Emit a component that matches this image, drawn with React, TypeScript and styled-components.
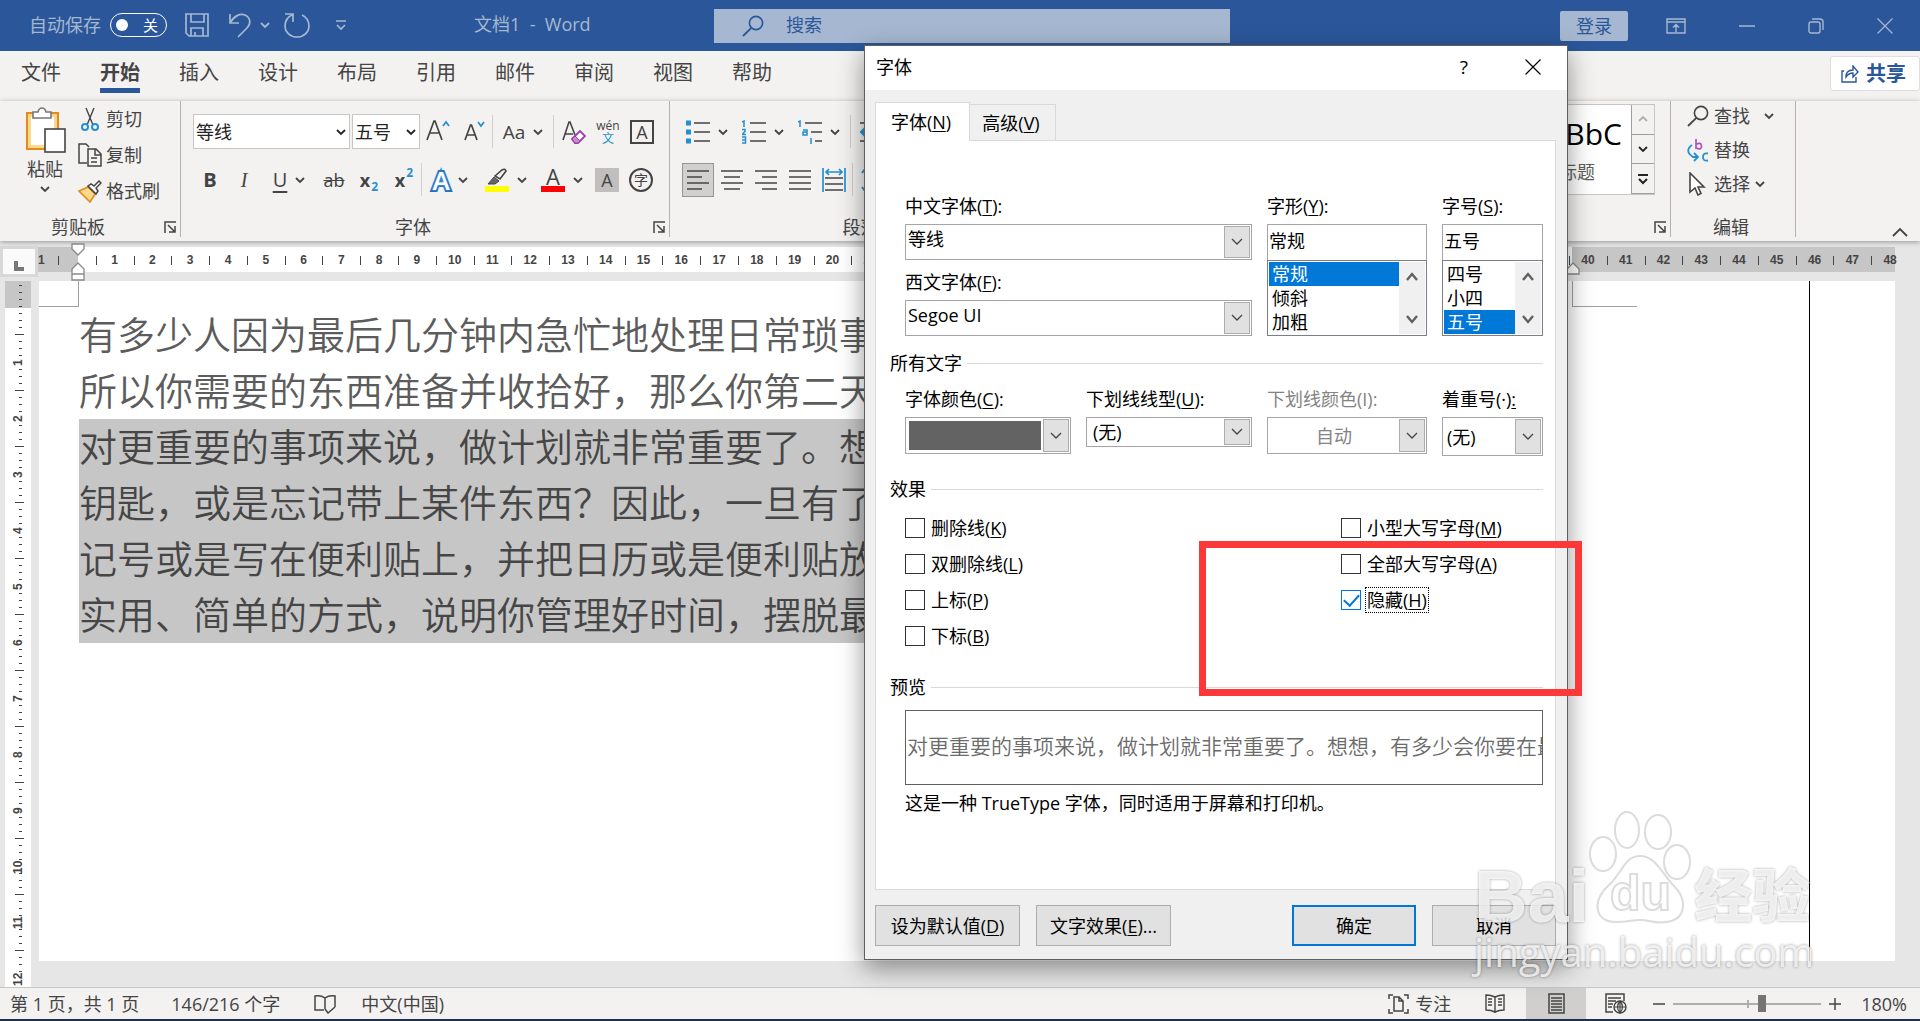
import React from "react";
import styled, { createGlobalStyle, css } from "styled-components";

const latin = '"Open Sans", "Noto Sans CJK SC", sans-serif';

const Global = createGlobalStyle`
  * { box-sizing: border-box; }
  body { margin: 0; font-family: ${latin}; font-size: 18px; line-height: 24px; color: #444; }
  button, input, select { font: inherit; color: inherit; margin: 0; }
  button { background: none; border: 0; padding: 0; cursor: default; white-space: nowrap; }
  p, ul { margin: 0; padding: 0; }
  svg { display: block; flex: none; }
`;

const Shell = styled.div`
  position: relative;
  display: flex;
  flex-direction: column;
  height: 100vh;
  overflow: hidden;
  background: #e6e6e6;
`;

/* ---------- icons ---------- */

type IconProps = { w?: number; h?: number; children: React.ReactNode };
const IconSvg = styled.svg`
  fill: none;
  stroke: currentColor;
  stroke-width: 2;
`;
const Icon = ({ w = 24, h = 24, children }: IconProps) => (
  <IconSvg width={w} height={h} viewBox={`0 0 ${w} ${h}`} aria-hidden="true">
    {children}
  </IconSvg>
);
const Chevron = () => (
  <Icon w={10} h={8}>
    <path d="M1 2l4 4 4-4" strokeWidth="1.8" />
  </Icon>
);
const WideChevron = () => (
  <Icon w={12} h={8}>
    <path d="M1 1l5 5 5-5" strokeWidth="1.3" />
  </Icon>
);
const Cross = ({ size = 16 }: { size?: number }) => (
  <Icon w={size} h={size}>
    <path d={`M0.5 0.5L${size - 0.5} ${size - 0.5}M${size - 0.5} 0.5L0.5 ${size - 0.5}`} strokeWidth="1.2" />
  </Icon>
);
const Launcher = () => (
  <Icon w={12} h={12}>
    <path d="M1 12V1h11M4 4l7 7M11 5v6H5" strokeWidth="1.5" />
  </Icon>
);
const Lines = ({ rows }: { rows: number[][] }) => (
  <Icon w={24} h={24}>
    <path d={rows.map(([a, b, y]) => `M${a} ${y}H${b}`).join("")} strokeWidth="1.7" />
  </Icon>
);

/* ---------- title bar ---------- */

const TitleBar = styled.header`
  display: flex;
  align-items: center;
  flex: none;
  height: 51px;
  background: #2b579a;
  color: #a6b8d1;
`;
const TitleLeft = styled.div`
  display: flex;
  align-items: center;
  width: 714px;
  padding: 0 0 2px 29px;
`;
const Toggle = styled.button`
  display: flex;
  align-items: center;
  justify-content: space-between;
  width: 57px;
  height: 24px;
  margin: 0 17px 0 9px;
  padding: 0 8px 0 5px;
  border: 1px solid #fff;
  border-radius: 12px;
  color: #fff;
  font-size: 15px;
  line-height: 20px;
`;
const Knob = styled.span`
  width: 12px;
  height: 12px;
  border-radius: 50%;
  background: #fff;
`;
const QuickButton = styled.button<{ $gap?: number }>`
  display: flex;
  align-items: center;
  gap: 8px;
  margin-right: ${(p) => p.$gap ?? 14}px;
`;
const DocTitle = styled.span`
  margin-left: 127px;
  padding-bottom: 2px;
  white-space: pre;
`;
const SearchBox = styled.label`
  display: flex;
  align-items: center;
  gap: 22px;
  width: 516px;
  height: 34px;
  padding-left: 28px;
  background: #a6b8d1;
  color: #2b579a;
`;
const SearchInput = styled.input`
  flex: 1;
  min-width: 0;
  border: 0;
  padding: 0 0 2px;
  background: none;
  outline: none;
  &::placeholder { color: #2b579a; opacity: 1; }
`;
const TitleRight = styled.div`
  display: flex;
  align-items: center;
  margin-left: auto;
  padding-right: 27px;
`;
const LoginButton = styled.button`
  width: 68px;
  height: 30px;
  margin-right: 38px;
  border-radius: 2px;
  background: #a6b8d1;
  color: #2b579a;
`;
const WindowButtons = styled.div`
  display: flex;
  align-items: center;
  gap: 53px;
`;

/* ---------- ribbon tabs ---------- */

const TabRow = styled.nav`
  display: flex;
  align-items: flex-start;
  flex: none;
  height: 50px;
  padding-left: 21px;
  background: #f3f2f1;
`;
const RibbonTab = styled.button<{ $active?: boolean }>`
  margin-right: 39px;
  padding: 8px 0 1px;
  border-bottom: 5px solid ${(p) => (p.$active ? "#2b579a" : "transparent")};
  font-size: 20px;
  line-height: 28px;
  font-weight: ${(p) => (p.$active ? 700 : 400)};
`;
const ShareButton = styled.button`
  display: flex;
  align-items: center;
  gap: 7px;
  height: 35px;
  margin: 5px 0 0 auto;
  padding: 0 13px 0 10px;
  border: 1px solid #e1dfdd;
  border-radius: 3px;
  background: #fff;
  color: #2b579a;
  font-size: 20px;
  font-weight: 700;
`;

/* ---------- ribbon body ---------- */

const Ribbon = styled.section`
  display: flex;
  flex: none;
  height: 140px;
  padding-bottom: 4px;
  background: #f3f2f1;
  box-shadow: 0 1px 5px rgba(0, 0, 0, 0.35);
  z-index: 1;
`;
const Group = styled.div<{ $w?: number; $pad?: string }>`
  display: flex;
  flex-direction: column;
  flex: ${(p) => (p.$w ? `0 0 ${p.$w}px` : "1 1 0")};
  min-width: 0;
  padding: ${(p) => p.$pad ?? "13px 0 0"};
  border-right: 1px solid #b3b0ad;
`;
const GroupFoot = styled.div`
  display: flex;
  align-items: center;
  height: 21px;
  margin-top: auto;
  padding-right: 4px;
  text-align: center;
  line-height: 20px;
`;
const FootLabel = styled.span`
  flex: 1;
`;
const FootLauncher = styled.button`
  width: 20px;
  padding-left: 8px;
`;
const ToolRow = styled.div<{ $pad?: number; $gap?: number; $top?: number }>`
  display: flex;
  align-items: center;
  gap: ${(p) => p.$gap ?? 0}px;
  height: 35px;
  margin-top: ${(p) => p.$top ?? 0}px;
  padding-left: ${(p) => p.$pad ?? 12}px;
`;
const Tool = styled.button<{ $w?: number; $on?: boolean }>`
  display: flex;
  align-items: center;
  justify-content: center;
  gap: 8px;
  flex: 0 0 ${(p) => p.$w ?? 34}px;
  height: 34px;
  ${(p) =>
    p.$on &&
    css`
      background: #d2d0ce;
      border: 1px solid #979593;
    `}
`;
const Divider = styled.span`
  flex: 0 0 1px;
  height: 33px;
  background: #d2d0ce;
`;
const Spacer = styled.span<{ $w: number }>`
  flex: 0 0 ${(p) => p.$w}px;
`;
const Glyph = styled.span<{ $size?: number; $bold?: boolean; $italic?: boolean; $line?: string }>`
  font-family: ${(p) => (p.$italic ? '"Liberation Serif", serif' : latin)};
  font-size: ${(p) => p.$size ?? 20}px;
  font-weight: ${(p) => (p.$bold ? 700 : 400)};
  font-style: ${(p) => (p.$italic ? "italic" : "normal")};
  text-decoration: ${(p) => p.$line ?? "none"};
  text-underline-offset: 4px;
`;
const Script = styled.span<{ $up?: boolean }>`
  color: #2490d0;
  font-size: 12px;
  font-weight: 700;
  line-height: 12px;
  align-self: ${(p) => (p.$up ? "flex-start" : "flex-end")};
`;
const ScriptPair = styled.span`
  display: flex;
  gap: 1px;
  align-items: center;
  height: 26px;
  font-weight: 700;
`;
const Stack = styled.span`
  display: flex;
  flex-direction: column;
  align-items: center;
  font-size: 12px;
  line-height: 13px;
`;
const Blue = styled.span`
  color: #2490d0;
`;
const Boxed = styled.span<{ $shape: "box" | "shade" | "round" }>`
  display: flex;
  align-items: center;
  justify-content: center;
  width: 24px;
  height: 24px;
  font-size: ${(p) => (p.$shape === "round" ? 14 : 18)}px;
  border: ${(p) => (p.$shape === "shade" ? "0" : "2px solid #444")};
  border-radius: ${(p) => (p.$shape === "round" ? "50%" : "0")};
  background: ${(p) => (p.$shape === "shade" ? "#c1bfbd" : "transparent")};
`;
const Outlined = styled.span`
  color: #fff;
  font-size: 26px;
  font-weight: 600;
  -webkit-text-stroke: 4px #1a6fc0;
  paint-order: stroke fill;
  text-shadow: 0 0 3px #6fb2ea;
`;
const ColorMark = styled.span<{ $color: string }>`
  display: flex;
  flex-direction: column;
  align-items: center;
  justify-content: flex-end;
  width: 24px;
  height: 24px;
  font-size: 22px;
  line-height: 19px;
  border-bottom: 6px solid ${(p) => p.$color};
`;

const RibbonField = styled.div<{ $w: number }>`
  display: grid;
  align-items: center;
  width: ${(p) => p.$w}px;
  height: 35px;
  border: 1px solid #c8c6c4;
  background: #fff;
  color: #252423;
`;
const FieldSelect = styled.select`
  grid-area: 1 / 1;
  width: 100%;
  height: 100%;
  padding: 0 2px;
  border: 0;
  outline: none;
  appearance: none;
  background: none;
`;
const FieldArrow = styled.span`
  grid-area: 1 / 1;
  justify-self: end;
  margin-right: 3px;
  pointer-events: none;
`;

const ClipboardRow = styled.div`
  display: flex;
  gap: 12px;
  padding-left: 24px;
`;
const PasteButton = styled.button`
  display: flex;
  flex-direction: column;
  align-items: center;
  gap: 4px;
  width: 42px;
`;
const ClipList = styled.div`
  display: flex;
  flex-direction: column;
  gap: 12px;
`;
const IconTextButton = styled.button`
  display: flex;
  align-items: center;
  gap: 4px;
  height: 24px;
`;

const Gallery = styled.div`
  display: flex;
  align-self: flex-end;
  width: 400px;
  height: 91px;
  margin-right: 15px;
  border: 1px solid #c8c6c4;
`;
const StyleTile = styled.button`
  flex: 1;
  display: flex;
  flex-direction: column;
  align-items: flex-end;
  justify-content: center;
  gap: 8px;
  background: #fff;
  color: #605e5c;
`;
const StyleSample = styled.span`
  margin-right: 9px;
  color: #000;
  font-size: 30px;
  line-height: 36px;
`;
const StyleName = styled.span`
  margin-right: 36px;
`;
const GalleryScroll = styled.div`
  display: grid;
  grid-template-rows: repeat(3, 1fr);
  width: 23px;
`;
const ScrollCell = styled.button<{ $dim?: boolean }>`
  display: flex;
  align-items: center;
  justify-content: center;
  border-left: 1px solid #a19f9d;
  border-bottom: 1px solid #a19f9d;
  color: ${(p) => (p.$dim ? "#b3b0ad" : "#252423")};
`;
const EditList = styled.div`
  display: flex;
  flex-direction: column;
  gap: 10px;
  padding-left: 16px;
`;
const EditButton = styled(IconTextButton)<{ $gap?: number }>`
  gap: ${(p) => p.$gap ?? 4}px;
`;
const CollapseArea = styled.div`
  flex: 0 0 124px;
  display: flex;
  align-items: flex-end;
  justify-content: flex-end;
  padding: 0 12px 0 0;
`;

/* ---------- rulers and page ---------- */

const RulerRow = styled.div`
  display: flex;
  align-items: flex-start;
  flex: none;
  height: 40px;
  padding: 5px 25px 0 0;
`;
const TabStop = styled.button`
  flex: 0 0 38px;
  display: flex;
  align-items: center;
  justify-content: center;
  height: 31px;
  padding: 8px 0 0;
  border: 3px solid #d8d8d8;
  background: #fafafa;
`;
const HRuler = styled.div`
  position: relative;
  display: flex;
  flex: 1;
  min-width: 0;
  height: 25px;
  margin-top: 1px;
  background: linear-gradient(to right, #c6c6c6 40px, #fff 40px, #fff 1534px, #c6c6c6 1534px);
  font-family: "Liberation Sans", sans-serif;
  font-size: 12px;
  font-weight: 700;
  line-height: 27px;
`;
const HScale = styled.div`
  flex: 0 0 1851px;
  display: grid;
  grid-template-columns: repeat(49, 1fr);
  margin-left: 20px;
`;
const HUnit = styled.span`
  text-align: center;
  background: linear-gradient(#444, #444) left 9px / 1px 9px no-repeat;
`;
const HEdge = styled.span`
  position: absolute;
  left: 0;
`;
const Indent = styled.span<{ $x: number }>`
  position: absolute;
  left: ${(p) => p.$x}px;
  top: 243px;
  z-index: 2;
`;
const Workspace = styled.div`
  display: flex;
  flex: 1;
  min-height: 0;
`;
const VRuler = styled.div`
  flex: 0 0 26px;
  margin: 0 8px 0 5px;
  overflow: hidden;
  background: linear-gradient(#c6c6c6 27px, #fff 27px);
  font-family: "Liberation Sans", sans-serif;
  font-size: 12px;
  font-weight: 700;
`;
const VHead = styled.div`
  height: 26px;
  background: repeating-linear-gradient(transparent 0 4px, #444 4px 5px, transparent 5px 7px) 14px 0 / 3px 100% no-repeat;
`;
const VUnit = styled.div`
  display: flex;
  align-items: flex-end;
  justify-content: center;
  height: 56px;
  background:
    linear-gradient(#444, #444) 10px 27px / 9px 1px no-repeat,
    repeating-linear-gradient(transparent 0 6px, #444 6px 7px) 14px 0 / 3px 49px no-repeat;
`;
const VNumber = styled.span`
  writing-mode: vertical-rl;
  transform: rotate(180deg);
  height: 14px;
  margin-bottom: -7px;
  line-height: 14px;
  text-align: center;
`;
const Page = styled.main`
  display: flex;
  flex: 1;
  min-width: 0;
  margin: 0 25px 26px 0;
  background: #fff;
`;
const MarginCorner = styled.div<{ $w: number; $right?: boolean }>`
  flex: 0 0 ${(p) => p.$w}px;
  height: 26px;
  border-bottom: 1px solid #a0a0a0;
  ${(p) => (p.$right ? "border-left" : "border-right")}: 1px solid #a0a0a0;
`;
const TextColumn = styled.article`
  flex: 1;
  min-width: 0;
  padding-top: 26px;
  font-family: "Noto Sans CJK SC", sans-serif;
  font-size: 38px;
  font-weight: 350;
  line-height: 51px;
  color: #5c5c5c;
`;
const Paragraph = styled.p<{ $selected?: boolean }>`
  width: fit-content;
  padding-bottom: 5px;
  white-space: pre;
  background: ${(p) => (p.$selected ? "#c6c6c6" : "none")};
  color: ${(p) => (p.$selected ? "#464646" : "inherit")};
`;
const PageEdge = styled.div`
  flex: 0 0 86px;
  margin-left: 172px;
  border-left: 1px solid #000;
`;

/* ---------- status bar ---------- */

const StatusBar = styled.footer`
  display: flex;
  align-items: center;
  flex: none;
  height: 34px;
  padding: 0 13px 0 10px;
  border-top: 1px solid #c6c6c6;
  border-bottom: 2px solid #1f2f49;
  background: #f3f2f1;
`;
const StatusButton = styled.button<{ $mr?: number; $on?: boolean }>`
  display: flex;
  align-items: center;
  justify-content: center;
  gap: 6px;
  height: 31px;
  margin-right: ${(p) => p.$mr ?? 0}px;
  ${(p) =>
    p.$on &&
    css`
      width: 60px;
      background: #d0cfce;
    `}
`;
const StatusRight = styled.div`
  display: flex;
  align-items: center;
  margin-left: auto;
`;
const Zoom = styled.input`
  appearance: none;
  width: 148px;
  height: 18px;
  margin: 0 8px;
  background:
    linear-gradient(#b0aeac, #b0aeac) 74px center / 2px 8px no-repeat,
    linear-gradient(#b0aeac, #b0aeac) center / 100% 2px no-repeat;
  &::-webkit-slider-thumb {
    appearance: none;
    width: 8px;
    height: 17px;
    background: #777574;
  }
`;

/* ---------- font dialog ---------- */

const Dialog = styled.div`
  position: absolute;
  left: 864px;
  top: 45px;
  z-index: 3;
  display: flex;
  flex-direction: column;
  width: 704px;
  height: 915px;
  border: 1px solid #5f5f5f;
  background: #f0f0f0;
  box-shadow: 0 8px 24px rgba(0, 0, 0, 0.42);
  color: #000;
`;
const DialogTitle = styled.div`
  display: flex;
  align-items: center;
  height: 44px;
  padding: 0 26px 2px 11px;
  background: #fff;
`;
const DialogName = styled.h1`
  margin: 0 auto 0 0;
  font-size: 18px;
  font-weight: 400;
`;
const HelpButton = styled.button`
  margin-right: 57px;
  font-size: 19px;
`;
const TabStrip = styled.div`
  display: flex;
  align-items: flex-end;
  height: 50px;
  padding-left: 10px;
`;
const DialogTab = styled.button<{ $active?: boolean }>`
  position: relative;
  z-index: ${(p) => (p.$active ? 1 : 0)};
  width: ${(p) => (p.$active ? 95 : 86)}px;
  height: ${(p) => (p.$active ? 39 : 36)}px;
  margin-bottom: ${(p) => (p.$active ? -1 : 0)}px;
  padding-right: 3px;
  border: 1px solid #d9d9d9;
  border-bottom: 0;
  border-left-width: ${(p) => (p.$active ? 1 : 0)}px;
  background: ${(p) => (p.$active ? "#fff" : "#f0f0f0")};
`;
const Panel = styled.div`
  flex: 1;
  margin: 0 11px 0 10px;
  padding: 53px 12px 0 14px;
  border: 1px solid #d9d9d9;
  background: #fff;
`;
const FieldGrid = styled.div<{ $cols: string; $top?: number }>`
  display: grid;
  grid-template-columns: ${(p) => p.$cols};
  column-gap: 15px;
  align-items: start;
  margin: ${(p) => p.$top ?? 0}px 0 0 15px;
`;
const Field = styled.div<{ $mt?: number }>`
  display: flex;
  flex-direction: column;
  margin-top: ${(p) => p.$mt ?? 0}px;
`;
const FieldLabel = styled.label<{ $dim?: boolean }>`
  margin-bottom: 6px;
  color: ${(p) => (p.$dim ? "#838383" : "#000")};
  white-space: nowrap;
`;
const Combo = styled.div<{ $h?: number; $dim?: boolean }>`
  display: grid;
  height: ${(p) => p.$h ?? 36}px;
  padding: 1px;
  border: 1px solid #a5a5a8;
  color: ${(p) => (p.$dim ? "#838383" : "#000")};
`;
const ComboSelect = styled.select<{ $pad?: string; $fill?: string }>`
  grid-area: 1 / 1;
  width: 100%;
  min-width: 0;
  height: 100%;
  padding: ${(p) => p.$pad ?? "0 1px 6px"};
  border: 0;
  outline: none;
  opacity: 1;
  appearance: none;
  color: inherit;
  background: none;
  ${(p) =>
    p.$fill &&
    css`
      background: linear-gradient(${p.$fill}, ${p.$fill}) 2px 2px / 132px 29px no-repeat;
    `}
`;
const ComboArrow = styled.span`
  grid-area: 1 / 1;
  justify-self: end;
  display: flex;
  align-items: center;
  justify-content: center;
  width: 26px;
  border: 1px solid #adadad;
  background: #e1e1e1;
  color: #444;
  pointer-events: none;
`;
const TextField = styled.input`
  width: 100%;
  height: 36px;
  padding: 0 1px 6px;
  border: 1px solid #a5a5a8;
  border-bottom: 0;
  outline: none;
`;
const ListBox = styled.div`
  display: flex;
  height: 76px;
  padding: 1px;
  border: 1px solid #7a7f8a;
`;
const Options = styled.ul`
  flex: 1;
  list-style: none;
`;
const Option = styled.li<{ $on?: boolean }>`
  height: 24px;
  padding-left: 3px;
  background: ${(p) => (p.$on ? "#0078d7" : "#fff")};
  color: ${(p) => (p.$on ? "#fff" : "#000")};
`;
const Scroll = styled.div`
  display: flex;
  flex-direction: column;
  justify-content: space-between;
  align-items: center;
  width: 26px;
  padding: 10px 0;
  background: #f0f0f0;
  color: #606060;
`;
const Heading = styled.h2<{ $top: number }>`
  display: flex;
  align-items: center;
  gap: 5px;
  margin: ${(p) => p.$top}px 0 0;
  font-size: 18px;
  font-weight: 400;
  &::after {
    content: "";
    flex: 1;
    height: 1px;
    background: #d9d9d9;
  }
`;
const Effects = styled.div`
  display: grid;
  grid-template-columns: 436px 1fr;
  grid-auto-flow: column;
  grid-template-rows: repeat(4, 36px);
  align-items: center;
  margin: 9px 0 0 15px;
`;
const Check = styled.label`
  display: flex;
  align-items: center;
  gap: 4px;
`;
const CheckInput = styled.input`
  appearance: none;
  display: grid;
  place-content: center;
  width: 20px;
  height: 20px;
  border: 1px solid #333;
  background: #fff;
  &:checked { border-color: #0078d7; }
  &:checked::before {
    content: "";
    width: 13px;
    height: 7px;
    margin-top: -4px;
    border: solid #0078d7;
    border-width: 0 0 2px 2px;
    transform: rotate(-48deg);
  }
`;
const CheckText = styled.span<{ $focus?: boolean }>`
  padding: 0 1px;
  border: 1px dotted ${(p) => (p.$focus ? "#000" : "transparent")};
`;
const Preview = styled.div`
  height: 75px;
  margin: 11px 0 0 15px;
  padding-left: 1px;
  overflow: hidden;
  border: 1px solid #5f5f5f;
  color: #6b6b6b;
  font-family: "Noto Sans CJK SC", sans-serif;
  font-size: 21px;
  font-weight: 350;
  line-height: 68px;
  white-space: nowrap;
`;
const Note = styled.p`
  margin: 6px 0 0 15px;
`;
const ButtonRow = styled.div`
  display: flex;
  gap: 16px;
  height: 69px;
  padding: 15px 11px 12px 10px;
`;
const DialogButton = styled.button<{ $w: number; $default?: boolean; $push?: boolean }>`
  width: ${(p) => p.$w}px;
  height: 41px;
  margin-left: ${(p) => (p.$push ? "auto" : "0")};
  border: ${(p) => (p.$default ? "2px solid #0078d7" : "1px solid #adadad")};
  background: #e1e1e1;
`;
const Highlight = styled.div`
  position: absolute;
  left: 1199px;
  top: 541px;
  z-index: 4;
  width: 383px;
  height: 155px;
  border: 7px solid #fd3838;
  pointer-events: none;
`;

/* ---------- watermark ---------- */

const Watermark = styled.div`
  position: absolute;
  right: 102px;
  bottom: 46px;
  z-index: 5;
  width: 344px;
  color: rgba(255, 255, 255, 0.8);
  pointer-events: none;
`;
const MarkTop = styled.div`
  display: flex;
  align-items: flex-end;
  height: 114px;
`;
const MarkWord = styled.span<{ $size: number }>`
  font-family: "Liberation Sans", "Noto Sans CJK SC", sans-serif;
  font-size: ${(p) => p.$size}px;
  font-weight: 900;
  line-height: 64px;
  white-space: nowrap;
  text-shadow: 0 0 3px rgba(0, 0, 0, 0.35);
`;
const MarkUrl = styled.div`
  font-size: 40px;
  line-height: 46px;
  text-shadow: 0 0 3px rgba(0, 0, 0, 0.4);
`;
const Paw = styled.svg`
  fill: rgba(255, 255, 255, 0.85);
  stroke: #dcdcdc;
  stroke-width: 2;
  margin: 0 2px 5px -1px;
  text { font-family: "Liberation Sans", sans-serif; font-size: 50px; font-weight: 700; fill: #fff; }
`;

const Key = styled.u`
  text-underline-offset: 2px;
`;

const ribbonTabs = ["文件", "开始", "插入", "设计", "布局", "引用", "邮件", "审阅", "视图", "帮助"];
const lines = {
  plain: ["有多少人因为最后几分钟内急忙地处理日常琐事", "所以你需要的东西准备并收拾好，那么你第二天"],
  selected: [
    "对更重要的事项来说，做计划就非常重要了。想",
    "钥匙，或是忘记带上某件东西？因此，一旦有了",
    "记号或是写在便利贴上，并把日历或是便利贴放",
    "实用、简单的方式，说明你管理好时间，摆脱最",
  ],
};
const effectsLeft = [["删除线", "K"], ["双删除线", "L"], ["上标", "P"], ["下标", "B"]];
const effectsRight = [["小型大写字母", "M"], ["全部大写字母", "A"], ["隐藏", "H"]];

const Keyed = ({ text, k, end = "" }: { text: string; k: string; end?: string }) => (
  <>
    {text}(<Key>{k}</Key>){end}
  </>
);

const Magnifier = ({ size = 22 }: { size?: number }) => (
  <Icon w={22} h={size}>
    <circle cx="14" cy="8" r="6.6" strokeWidth="1.6" />
    <path d="M9.4 12.8L1 21" strokeWidth="1.8" />
  </Icon>
);

const EffectCheck = ({ item, on }: { item: string[]; on?: boolean }) => (
  <Check>
    <CheckInput type="checkbox" defaultChecked={on} />
    <CheckText $focus={on}>
      <Keyed text={item[0]} k={item[1]} />
    </CheckText>
  </Check>
);

const ScrollArrows = () => (
  <Scroll>
    <Icon w={12} h={9}>
      <path d="M1 8l5-6 5 6" strokeWidth="2.4" />
    </Icon>
    <Icon w={12} h={9}>
      <path d="M1 1l5 6 5-6" strokeWidth="2.4" />
    </Icon>
  </Scroll>
);

function TopBar() {
  return (
    <TitleBar>
      <TitleLeft>
        自动保存
        <Toggle aria-label="自动保存">
          <Knob />关
        </Toggle>
        <QuickButton $gap={18} aria-label="保存">
          <Icon w={26} h={26}>
            <path d="M2 2h22v22H5l-3-3zM7 2v8h13V2M7 24v-8h12v8M11 24v-4" strokeWidth="1.7" />
          </Icon>
        </QuickButton>
        <QuickButton aria-label="撤消">
          <Icon w={24} h={26}>
            <path d="M2 2v9h9M2 11C6 4 12 1 17 3c6 3 6 9 2 13l-9 9" strokeWidth="1.7" />
          </Icon>
          <Chevron />
        </QuickButton>
        <QuickButton $gap={25} aria-label="恢复">
          <Icon w={26} h={26}>
            <path d="M1 2h8v8M9 2.500C3 5 1 9 1 14a12 11 0 0 0 24 0c0-5-3-9-7-11" strokeWidth="1.7" />
          </Icon>
        </QuickButton>
        <QuickButton $gap={0} aria-label="自定义">
          <Icon w={12} h={12}>
            <path d="M1 2h10M2 6l4 4 4-4" strokeWidth="1.7" />
          </Icon>
        </QuickButton>
        <DocTitle>{"文档1  -  Word"}</DocTitle>
      </TitleLeft>
      <SearchBox>
        <Magnifier />
        <SearchInput placeholder="搜索" aria-label="搜索" />
      </SearchBox>
      <TitleRight>
        <LoginButton>登录</LoginButton>
        <WindowButtons>
          <button aria-label="功能区显示选项">
            <Icon w={20} h={16}>
              <path d="M1 1h18v14H1zM1 4h18M10 14V7M7 9.500l3-3 3 3" strokeWidth="1.4" />
            </Icon>
          </button>
          <button aria-label="最小化">
            <Icon w={16} h={16}>
              <path d="M0 8h16" strokeWidth="1.5" />
            </Icon>
          </button>
          <button aria-label="还原">
            <Icon w={16} h={16}>
              <rect x="1" y="4" width="11" height="11" rx="2" strokeWidth="1.4" />
              <path d="M4 1h8q3 0 3 3v8" strokeWidth="1.4" />
            </Icon>
          </button>
          <button aria-label="关闭">
            <Cross />
          </button>
        </WindowButtons>
      </TitleRight>
    </TitleBar>
  );
}

function FontGroup() {
  return (
    <Group $w={489}>
      <ToolRow>
        <RibbonField $w={157}>
          <FieldSelect aria-label="字体">
            <option>等线</option>
          </FieldSelect>
          <FieldArrow><Chevron /></FieldArrow>
        </RibbonField>
        <Spacer $w={2} />
        <RibbonField $w={68}>
          <FieldSelect aria-label="字号">
            <option>五号</option>
          </FieldSelect>
          <FieldArrow><Chevron /></FieldArrow>
        </RibbonField>
        <Tool $w={36} aria-label="增大字号">
          <Icon w={24} h={24}>
            <path d="M1 20L8 1h1l7 19M4 13h9" strokeWidth="1.7" />
            <path d="M17 6l3-4 3 4" stroke="#2490d0" strokeWidth="1.7" />
          </Icon>
        </Tool>
        <Tool $w={36} aria-label="减小字号">
          <Icon w={24} h={24}>
            <path d="M3 20L8.500 5h1L15 20M5 15h8" strokeWidth="1.7" />
            <path d="M16 2l3 4 3-4" stroke="#2490d0" strokeWidth="1.7" />
          </Icon>
        </Tool>
        <Divider />
        <Tool $w={60} aria-label="更改大小写">
          <Glyph $size={19}>Aa</Glyph>
          <Chevron />
        </Tool>
        <Divider />
        <Spacer $w={3} />
        <Tool aria-label="清除格式">
          <Icon w={24} h={24}>
            <path d="M1 20L7 2h1l5 13M3 14h8" strokeWidth="1.6" />
            <path d="M10 19l8-8 5 5-7 7h-3z" stroke="#9b3fa8" fill="#fff" strokeWidth="1.8" />
            <path d="M10 19l3-3 5 5-2 2h-3z" fill="#c98bd2" stroke="#9b3fa8" strokeWidth="1" />
          </Icon>
        </Tool>
        <Tool aria-label="拼音指南">
          <Stack>
            wén<Blue>文</Blue>
          </Stack>
        </Tool>
        <Tool aria-label="字符边框"><Boxed $shape="box">A</Boxed></Tool>
      </ToolRow>
      <ToolRow $top={13}>
        <Tool aria-label="加粗"><Glyph $bold>B</Glyph></Tool>
        <Tool aria-label="倾斜"><Glyph $italic>I</Glyph></Tool>
        <Tool $w={56} aria-label="下划线">
          <Glyph $line="underline">U</Glyph>
          <Chevron />
        </Tool>
        <Tool aria-label="删除线"><Glyph $size={18} $line="line-through">ab</Glyph></Tool>
        <Tool $w={36} aria-label="下标"><ScriptPair>x<Script>2</Script></ScriptPair></Tool>
        <Tool aria-label="上标"><ScriptPair>x<Script $up>2</Script></ScriptPair></Tool>
        <Divider />
        <Tool $w={56} aria-label="文本效果">
          <Outlined>A</Outlined>
          <Chevron />
        </Tool>
        <Tool $w={56} aria-label="突出显示">
          <ColorMark $color="#ffff00">
            <Icon w={24} h={18}>
              <path d="M10 8l7-6q3-2 4 1l-6 8z" strokeWidth="1.6" />
              <path d="M3 16l6-7 5 4-4 3z" fill="#666" strokeWidth="1" />
            </Icon>
          </ColorMark>
          <Chevron />
        </Tool>
        <Tool $w={56} aria-label="字体颜色">
          <ColorMark $color="#ff0000">A</ColorMark>
          <Chevron />
        </Tool>
        <Tool aria-label="字符底纹"><Boxed $shape="shade">A</Boxed></Tool>
        <Tool aria-label="带圈字符"><Boxed $shape="round">字</Boxed></Tool>
      </ToolRow>
      <GroupFoot>
        <FootLabel>字体</FootLabel>
        <FootLauncher aria-label="字体设置"><Launcher /></FootLauncher>
      </GroupFoot>
    </Group>
  );
}

function ParagraphGroup() {
  return (
    <Group $w={386}>
      <ToolRow $pad={9}>
        <Tool $w={56} aria-label="项目符号">
          <Icon w={24} h={24}>
            <path d="M0 3h5M0 12h5M0 21h5" stroke="#2490d0" strokeWidth="5" />
            <path d="M8 3h16M8 12h16M8 21h16" strokeWidth="1.7" />
          </Icon>
          <Chevron />
        </Tool>
        <Tool $w={56} aria-label="编号">
          <Icon w={24} h={24}>
            <path d="M0 2l2-1v6M0 9.500h3v2l-3 3h4M0 17h3.500v6H0M0 20h3" stroke="#2490d0" strokeWidth="1.5" />
            <path d="M8 3h16M8 12h16M8 21h16" strokeWidth="1.7" />
          </Icon>
          <Chevron />
        </Tool>
        <Tool $w={56} aria-label="多级列表">
          <Icon w={24} h={24}>
            <path d="M0 2l2-1v6M5 10h4v5H5v-3h4M13 18v6" stroke="#2490d0" strokeWidth="1.5" />
            <path d="M7 3h17M13 12h11M17 21h7" strokeWidth="1.7" />
          </Icon>
          <Chevron />
        </Tool>
        <Spacer $w={3} />
        <Divider />
        <Spacer $w={4} />
        <Tool aria-label="减少缩进">
          <Icon w={24} h={24}>
            <path d="M0 3h24M12 9h12M12 15h12M0 21h24" strokeWidth="1.7" />
            <path d="M10 12H2M5 8l-4 4 4 4" stroke="#2490d0" />
          </Icon>
        </Tool>
      </ToolRow>
      <ToolRow $top={13} $pad={12} $gap={2}>
        <Tool $w={32} $on aria-label="左对齐"><Lines rows={[[1, 23, 3], [1, 16, 9], [1, 23, 15], [1, 16, 21]]} /></Tool>
        <Tool $w={32} aria-label="居中"><Lines rows={[[1, 23, 3], [4, 20, 9], [1, 23, 15], [4, 20, 21]]} /></Tool>
        <Tool $w={32} aria-label="右对齐"><Lines rows={[[1, 23, 3], [8, 23, 9], [1, 23, 15], [8, 23, 21]]} /></Tool>
        <Tool $w={32} aria-label="两端对齐"><Lines rows={[[1, 23, 3], [1, 23, 9], [1, 23, 15], [1, 23, 21]]} /></Tool>
        <Tool $w={32} aria-label="分散对齐">
          <Icon w={24} h={24}>
            <path d="M1 0v24M23 0v24M4 4h16M7 1L4 4l3 3M17 1l3 3-3 3" stroke="#2490d0" strokeWidth="1.7" />
            <path d="M3 10h18M3 16h18M3 22h18" strokeWidth="1.7" />
          </Icon>
        </Tool>
        <Divider />
        <Tool $w={36} aria-label="行距">
          <Icon w={24} h={24}>
            <path d="M4 2v20M1 5l3-4 3 4M1 19l3 4 3-4" stroke="#2490d0" />
            <path d="M11 3h13M11 12h13M11 21h13" strokeWidth="1.7" />
          </Icon>
        </Tool>
      </ToolRow>
      <GroupFoot>
        <FootLabel>段落</FootLabel>
      </GroupFoot>
    </Group>
  );
}

function RibbonArea() {
  return (
    <>
      <TabRow>
        {ribbonTabs.map((t) => (
          <RibbonTab key={t} $active={t === "开始"}>{t}</RibbonTab>
        ))}
        <ShareButton>
          <Icon w={18} h={18}>
            <path d="M3 6H1v11h14v-5M5 12c0-5 3-7 7-7V1l5 6-5 5V8c-3 0-5 1-7 4z" strokeWidth="1.4" />
          </Icon>
          共享
        </ShareButton>
      </TabRow>
      <Ribbon>
        <Group $w={181} $pad="6px 0 0">
          <ClipboardRow>
            <PasteButton>
              <Icon w={42} h={46}>
                <rect x="3" y="6" width="31" height="36" stroke="#e8891c" fill="#fbd98c" />
                <rect x="7" y="10" width="23" height="28" fill="#fff" stroke="none" />
                <path d="M9 11V5h5q1-4 4-4t4 4h5v6z" fill="#fff" stroke="#777" strokeWidth="1.6" />
                <rect x="21" y="22" width="20" height="23" fill="#fff" stroke="#444" strokeWidth="1.6" />
              </Icon>
              <span>粘贴</span>
              <Chevron />
            </PasteButton>
            <ClipList>
              <IconTextButton>
                <Icon>
                  <path d="M8 1l7 17M16 1L9 18" strokeWidth="1.4" />
                  <circle cx="7" cy="20" r="3" stroke="#2490d0" />
                  <circle cx="17" cy="20" r="3" stroke="#2490d0" />
                </Icon>
                剪切
              </IconTextButton>
              <IconTextButton>
                <Icon>
                  <path d="M9 20H1V1h7l3 3M10 6h8l5 5v12H10zM17 6v6h6M13 15h6M13 19h6" strokeWidth="1.5" />
                </Icon>
                复制
              </IconTextButton>
              <IconTextButton>
                <Icon>
                  <path d="M1 12l9-4 7 7-5 8z" stroke="#e8891c" fill="#fbd98c" strokeWidth="1.6" />
                  <path d="M10 7l3-2 3 2 5-5 2 2-5 5 2 3-2 3z" fill="#fff" strokeWidth="1.5" />
                </Icon>
                格式刷
              </IconTextButton>
            </ClipList>
          </ClipboardRow>
          <GroupFoot>
            <FootLabel>剪贴板</FootLabel>
            <FootLauncher aria-label="剪贴板设置"><Launcher /></FootLauncher>
          </GroupFoot>
        </Group>
        <FontGroup />
        <ParagraphGroup />
        <Group $pad="3px 0 0">
          <Gallery>
            <StyleTile>
              <StyleSample>AaBbC</StyleSample>
              <StyleName>标题</StyleName>
            </StyleTile>
            <GalleryScroll>
              <ScrollCell $dim aria-label="上一行">
                <Icon w={10} h={8}><path d="M1 6l4-4 4 4" strokeWidth="1.8" /></Icon>
              </ScrollCell>
              <ScrollCell aria-label="下一行"><Chevron /></ScrollCell>
              <ScrollCell aria-label="更多">
                <Icon w={12} h={12}><path d="M1 2h10M2 6l4 4 4-4" /></Icon>
              </ScrollCell>
            </GalleryScroll>
          </Gallery>
          <GroupFoot>
            <FootLabel />
            <FootLauncher aria-label="样式设置"><Launcher /></FootLauncher>
          </GroupFoot>
        </Group>
        <Group $w={125} $pad="3px 0 0">
          <EditList>
            <EditButton $gap={5}>
              <Magnifier />查找<Spacer $w={4} /><Chevron />
            </EditButton>
            <EditButton $gap={5}>
              <Icon w={22} h={24}>
                <path d="M9 1v10M9 6.500q5-3 5.500 1.500T9 10" stroke="#b14fc0" strokeWidth="1.7" />
                <path d="M21 15.500q-5-1-5 3.500t5 3.500M5 7q-8 6 1 12h4M7 15l4 4-4 4" stroke="#2490d0" strokeWidth="1.8" />
              </Icon>
              替换
            </EditButton>
            <EditButton $gap={5}>
              <Icon w={22} h={24}>
                <path d="M3 1v19l5-4 3 7 3-1.500-3-6.500h6z" fill="#fff" strokeWidth="1.6" />
              </Icon>
              选择<Chevron />
            </EditButton>
          </EditList>
          <GroupFoot>
            <FootLabel>编辑</FootLabel>
          </GroupFoot>
        </Group>
        <CollapseArea>
          <button aria-label="折叠功能区">
            <Icon w={16} h={10}><path d="M1 9l7-7 7 7" strokeWidth="1.8" /></Icon>
          </button>
        </CollapseArea>
      </Ribbon>
    </>
  );
}

function DocumentArea() {
  return (
    <>
      <RulerRow>
        <TabStop aria-label="制表位">
          <Icon w={10} h={10}><path d="M2 0v8h8" strokeWidth="4" stroke="#777" /></Icon>
        </TabStop>
        <HRuler>
          <HEdge>1</HEdge>
          <HScale>
            {Array.from({ length: 49 }, (_, n) => (
              <HUnit key={n}>{n || ""}</HUnit>
            ))}
          </HScale>
        </HRuler>
      </RulerRow>
      <Indent $x={71}>
        <Icon w={14} h={38}>
          <path d="M1 1h12v5l-6 6-6-6zM1 37V26l6-6 6 6v11zM1 31h12" fill="#fff" stroke="#888" strokeWidth="1.3" />
        </Icon>
      </Indent>
      <Indent $x={1566}>
        <Icon w={14} h={38}>
          <path d="M1 31v-5l6-6 6 6v5z" fill="#fff" stroke="#888" strokeWidth="1.3" />
        </Icon>
      </Indent>
      <Workspace>
        <VRuler>
          <VHead />
          {Array.from({ length: 12 }, (_, n) => (
            <VUnit key={n}>
              <VNumber>{n + 1}</VNumber>
            </VUnit>
          ))}
        </VRuler>
        <Page>
          <MarginCorner $w={40} />
          <TextColumn>
            {lines.plain.map((l) => <Paragraph key={l}>{l}</Paragraph>)}
            {lines.selected.map((l) => <Paragraph key={l} $selected>{l}</Paragraph>)}
          </TextColumn>
          <MarginCorner $w={65} $right />
          <PageEdge />
        </Page>
      </Workspace>
    </>
  );
}

function Status() {
  return (
    <StatusBar>
      <StatusButton $mr={32}>第 1 页，共 1 页</StatusButton>
      <StatusButton $mr={34}>146/216 个字</StatusButton>
      <StatusButton $mr={25} aria-label="校对">
        <Icon w={22} h={20}>
          <path d="M11 4q-4-3-10-2v14h9M11 4q4-3 10-2v11M11 4v11M11 15l3 4 7-6" strokeWidth="1.5" />
        </Icon>
      </StatusButton>
      <StatusButton>中文(中国)</StatusButton>
      <StatusRight>
        <StatusButton $mr={34}>
          <Icon w={21} h={20}>
            <path d="M5 1H1v4M16 1h4v4M5 19H1v-4M16 19h4v-4M6 3h5l4 4v10H6zM11 3v4h4" strokeWidth="1.5" />
          </Icon>
          专注
        </StatusButton>
        <StatusButton $mr={21} aria-label="阅读视图">
          <Icon w={20} h={20}>
            <path d="M10 3q-4-2-9-2v15q5 0 9 2 4-2 9-2V1q-5 0-9 2zM10 3v16M3 5h4M3 8h4M3 11h4M13 5h4M13 8h4M13 11h4" strokeWidth="1.4" />
          </Icon>
        </StatusButton>
        <StatusButton $on $mr={19} aria-label="页面视图">
          <Icon w={17} h={21}>
            <path d="M1 1h15v19H1zM3 5h11M3 8h11M3 11h11M3 14h11M3 17h11" strokeWidth="1.5" />
          </Icon>
        </StatusButton>
        <StatusButton $mr={26} aria-label="Web 版式">
          <Icon w={22} h={21}>
            <path d="M8 19H1V1h18v7M3 5h13M3 8h8M3 11h5M3 14h4" strokeWidth="1.5" />
            <circle cx="15" cy="14" r="6" strokeWidth="1.4" />
            <path d="M9 14h12M15 8v12M15 8q-5 6 0 12q5-6 0-12" strokeWidth="1.2" />
          </Icon>
        </StatusButton>
        <StatusButton aria-label="缩小">
          <Icon w={12} h={12}><path d="M0 6h12" strokeWidth="1.5" /></Icon>
        </StatusButton>
        <Zoom type="range" min={10} max={270} defaultValue={168} aria-label="缩放" />
        <StatusButton $mr={20} aria-label="放大">
          <Icon w={12} h={12}><path d="M0 6h12M6 0v12" strokeWidth="1.5" /></Icon>
        </StatusButton>
        <StatusButton>180%</StatusButton>
      </StatusRight>
    </StatusBar>
  );
}

function FontDialog() {
  return (
    <Dialog role="dialog" aria-label="字体">
      <DialogTitle>
        <DialogName>字体</DialogName>
        <HelpButton>?</HelpButton>
        <button aria-label="关闭"><Cross /></button>
      </DialogTitle>
      <TabStrip>
        <DialogTab $active><Keyed text="字体" k="N" /></DialogTab>
        <DialogTab><Keyed text="高级" k="V" /></DialogTab>
      </TabStrip>
      <Panel>
        <FieldGrid $cols="347fr 160fr 101fr">
          <div>
            <Field>
              <FieldLabel htmlFor="cjk"><Keyed text="中文字体" k="T" end=":" /></FieldLabel>
              <Combo>
                <ComboSelect id="cjk"><option>等线</option></ComboSelect>
                <ComboArrow><WideChevron /></ComboArrow>
              </Combo>
            </Field>
            <Field $mt={10}>
              <FieldLabel htmlFor="western"><Keyed text="西文字体" k="F" end=":" /></FieldLabel>
              <Combo>
                <ComboSelect id="western"><option>Segoe UI</option></ComboSelect>
                <ComboArrow><WideChevron /></ComboArrow>
              </Combo>
            </Field>
          </div>
          <Field>
            <FieldLabel htmlFor="style"><Keyed text="字形" k="Y" end=":" /></FieldLabel>
            <TextField id="style" defaultValue="常规" />
            <ListBox>
              <Options role="listbox" aria-label="字形">
                <Option role="option" aria-selected $on>常规</Option>
                <Option role="option">倾斜</Option>
                <Option role="option">加粗</Option>
              </Options>
              <ScrollArrows />
            </ListBox>
          </Field>
          <Field>
            <FieldLabel htmlFor="size"><Keyed text="字号" k="S" end=":" /></FieldLabel>
            <TextField id="size" defaultValue="五号" />
            <ListBox>
              <Options role="listbox" aria-label="字号">
                <Option role="option">四号</Option>
                <Option role="option">小四</Option>
                <Option role="option" aria-selected $on>五号</Option>
              </Options>
              <ScrollArrows />
            </ListBox>
          </Field>
        </FieldGrid>

        <Heading $top={15}>所有文字</Heading>
        <FieldGrid $cols="166fr 166fr 160fr 101fr" $top={12}>
          <Field>
            <FieldLabel htmlFor="color"><Keyed text="字体颜色" k="C" end=":" /></FieldLabel>
            <Combo $h={37}>
              <ComboSelect id="color" $fill="#636363"><option aria-label="灰色" /></ComboSelect>
              <ComboArrow><WideChevron /></ComboArrow>
            </Combo>
          </Field>
          <Field>
            <FieldLabel htmlFor="line"><Keyed text="下划线线型" k="U" end=":" /></FieldLabel>
            <Combo $h={30}>
              <ComboSelect id="line" $pad="0 5px"><option>(无)</option></ComboSelect>
              <ComboArrow><WideChevron /></ComboArrow>
            </Combo>
          </Field>
          <Field>
            <FieldLabel htmlFor="linecolor" $dim>下划线颜色(I):</FieldLabel>
            <Combo $h={37} $dim>
              <ComboSelect id="linecolor" $pad="0 0 0 47px" disabled><option>自动</option></ComboSelect>
              <ComboArrow><WideChevron /></ComboArrow>
            </Combo>
          </Field>
          <Field>
            <FieldLabel htmlFor="mark">着重号(·)<Key>:</Key></FieldLabel>
            <Combo $h={39}>
              <ComboSelect id="mark" $pad="0 3px"><option>(无)</option></ComboSelect>
              <ComboArrow><WideChevron /></ComboArrow>
            </Combo>
          </Field>
        </FieldGrid>

        <Heading $top={21}>效果</Heading>
        <Effects>
          {effectsLeft.map((e) => <EffectCheck key={e[1]} item={e} />)}
          {effectsRight.map((e) => <EffectCheck key={e[1]} item={e} on={e[1] === "H"} />)}
        </Effects>

        <Heading $top={21}>预览</Heading>
        <Preview>对更重要的事项来说，做计划就非常重要了。想想，有多少会你要在最</Preview>
        <Note>这是一种 TrueType 字体，同时适用于屏幕和打印机。</Note>
      </Panel>
      <ButtonRow>
        <DialogButton $w={145}><Keyed text="设为默认值" k="D" /></DialogButton>
        <DialogButton $w={135}><Keyed text="文字效果" k="E" end="..." /></DialogButton>
        <DialogButton $w={124} $default $push>确定</DialogButton>
        <DialogButton $w={124}>取消</DialogButton>
      </ButtonRow>
    </Dialog>
  );
}

export default function App() {
  return (
    <>
      <Global />
      <Shell>
        <TopBar />
        <RibbonArea />
        <DocumentArea />
        <Status />
        <FontDialog />
        <Highlight />
        <Watermark>
          <MarkTop>
            <MarkWord $size={74}>Bai</MarkWord>
            <Paw width="104" height="114" viewBox="0 0 104 114">
              <ellipse cx="15" cy="44" rx="13" ry="17" />
              <ellipse cx="39" cy="20" rx="12" ry="18" />
              <ellipse cx="70" cy="22" rx="13" ry="17" />
              <ellipse cx="89" cy="52" rx="13" ry="17" />
              <path d="M52 46c-16 0-18 18-32 30C4 90 6 112 28 112c12 0 14-2 24-2s14 4 26 2c20-2 22-22 8-36C74 64 68 46 52 46z" />
              <text x="22" y="100">du</text>
            </Paw>
            <MarkWord $size={58}>经验</MarkWord>
          </MarkTop>
          <MarkUrl>jingyan.baidu.com</MarkUrl>
        </Watermark>
      </Shell>
    </>
  );
}
